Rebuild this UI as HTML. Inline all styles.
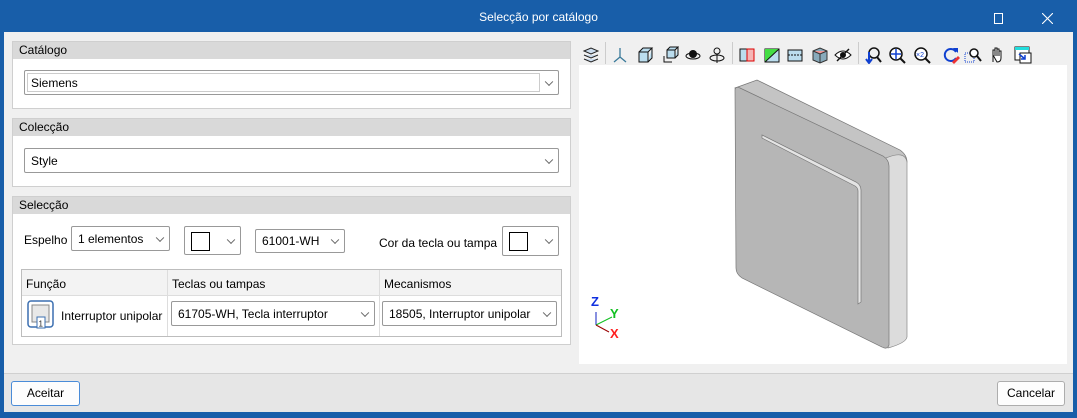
<!DOCTYPE html>
<html><head><meta charset="utf-8"><style>
*{box-sizing:border-box;margin:0;padding:0}
body{width:1077px;height:418px;overflow:hidden;background:#185ea9;font-family:"Liberation Sans",sans-serif;font-size:12px;color:#000;position:relative}
.a{position:absolute}
.title{left:0;top:0;width:1077px;height:32px;color:#fff;text-align:center;line-height:34px;font-size:12px}
.main{left:4px;top:32px;width:1069px;height:341px;background:#f0f0f0}
.bot{left:4px;top:373px;width:1069px;height:39px;background:#e6e6e6;border-top:1px solid #d0d0d0}
.grp{background:#fff;border:1px solid #cfcfcf}
.gh{background:#d9d9d9;height:17px;line-height:17px;padding-left:6px;font-size:12px}
.cb{background:#fff;border:1px solid #999;border-radius:2px}
.cb .t{position:absolute;left:6px;top:0;bottom:0;display:flex;align-items:center}
.ch{position:absolute;right:6px;top:50%;width:6px;height:6px;border-right:1px solid #666;border-bottom:1px solid #666;transform:translateY(-70%) rotate(45deg)}
.sw{position:absolute;left:6px;top:5px;width:19px;height:19px;border:1px solid #000;background:#fff}
.btn{background:#fdfdfd;border:1px solid #adadad;border-radius:3px;text-align:center;line-height:23px}
.ic{top:46px;width:18px;height:18px}
</style></head><body>
<div class="a title">Selecção por catálogo</div>
<div class="a" style="left:994px;top:13px;width:9px;height:11px;border:1px solid #fff"></div>
<svg class="a" style="left:1042px;top:13px" width="11" height="11"><path d="M0 0L11 11M11 0L0 11" stroke="#fff" stroke-width="1.1"/></svg>
<div class="a main"></div>

<div class="a grp" style="left:12px;top:41px;width:559px;height:68px"><div class="gh">Catálogo</div></div>
<div class="a cb" style="left:24px;top:70px;width:535px;height:25px"><div class="a" style="left:2px;top:2px;width:513px;height:19px;border:1px solid #ccc"></div><div class="t">Siemens</div><div class="ch"></div></div>
<div class="a grp" style="left:12px;top:118px;width:559px;height:69px"><div class="gh">Colecção</div></div>
<div class="a cb" style="left:24px;top:148px;width:535px;height:25px"><div class="t">Style</div><div class="ch"></div></div>
<div class="a grp" style="left:12px;top:196px;width:559px;height:149px"><div class="gh">Selecção</div></div>
<div class="a" style="left:24px;top:233px">Espelho</div>
<div class="a cb" style="left:71px;top:226px;width:99px;height:25px"><div class="t">1 elementos</div><div class="ch"></div></div>
<div class="a cb" style="left:184px;top:226px;width:57px;height:29px"><div class="sw"></div><div class="ch"></div></div>
<div class="a cb" style="left:255px;top:229px;width:90px;height:24px"><div class="t">61001-WH</div><div class="ch"></div></div>
<div class="a" style="left:379px;top:236px">Cor da tecla ou tampa</div>
<div class="a cb" style="left:502px;top:226px;width:57px;height:30px"><div class="sw"></div><div class="ch"></div></div>
<div class="a" style="left:21px;top:269px;width:541px;height:68px;border:1px solid #bdbdbd;background:#fff"></div>
<div class="a" style="left:22px;top:270px;width:539px;height:26px;background:#f3f3f3;border-bottom:1px solid #ddd"></div>
<div class="a" style="left:167px;top:270px;width:1px;height:66px;background:#ddd"></div>
<div class="a" style="left:379px;top:270px;width:1px;height:66px;background:#ddd"></div>
<div class="a" style="left:26px;top:277px">Função</div>
<div class="a" style="left:172px;top:277px">Teclas ou tampas</div>
<div class="a" style="left:384px;top:277px">Mecanismos</div>
<svg class="a" style="left:27px;top:300px" width="28" height="30" viewBox="0 0 28 30"><rect x="1" y="1" width="25" height="26" rx="3" fill="#fff" stroke="#3b6fb0" stroke-width="1.5"/><rect x="5" y="5" width="17" height="17" fill="#e8e8e8" stroke="#888"/><rect x="10" y="17" width="8" height="11" fill="#fff" stroke="#3b6fb0"/><text x="11.5" y="26.5" font-size="8" font-family="Liberation Sans" fill="#222">1</text></svg>
<div class="a" style="left:61px;top:309px">Interruptor unipolar</div>
<div class="a cb" style="left:171px;top:301px;width:204px;height:25px"><div class="t">61705-WH, Tecla interruptor</div><div class="ch"></div></div>
<div class="a cb" style="left:382px;top:301px;width:175px;height:25px"><div class="t">18505, Interruptor unipolar</div><div class="ch"></div></div>

<div class="a" style="left:605px;top:42px;width:1px;height:22px;background:#ccc"></div>
<div class="a" style="left:732px;top:42px;width:1px;height:22px;background:#ccc"></div>
<div class="a" style="left:858px;top:42px;width:1px;height:22px;background:#ccc"></div>
<svg class="a ic" style="left:582px" viewBox="0 0 18 18"><path d="M2 5l7-3 7 3-7 3z M2 9l7 3 7-3 M2 13l7 3 7-3" fill="#cde" stroke="#222"/></svg>
<svg class="a ic" style="left:611px" viewBox="0 0 18 18"><path d="M9 2v9 M9 11l-6 5 M9 11l6 5" stroke="#3a7a9a" fill="none" stroke-width="1.3"/></svg>
<svg class="a ic" style="left:636px" viewBox="0 0 18 18"><path d="M3 6h9v10H3z M3 6l4-4h9l-4 4 M12 16l4-4V2" fill="#bde" stroke="#111"/></svg>
<svg class="a ic" style="left:661px" viewBox="0 0 18 18"><path d="M6 4h8v8H6z M6 4l3-3h8l-3 3 M14 12l3-3V1" fill="#bde" stroke="#111"/><path d="M3 10v6h8" fill="none" stroke="#111"/></svg>
<svg class="a ic" style="left:684px" viewBox="0 0 18 18"><circle cx="9" cy="8" r="4" fill="#111"/><ellipse cx="9" cy="10" rx="7" ry="3" fill="none" stroke="#111"/></svg>
<svg class="a ic" style="left:708px" viewBox="0 0 18 18"><circle cx="9" cy="5" r="3" fill="none" stroke="#111"/><path d="M9 8v9" stroke="#111"/><ellipse cx="9" cy="12" rx="7" ry="3" fill="none" stroke="#111"/></svg>
<svg class="a ic" style="left:738px" viewBox="0 0 18 18"><rect x="2" y="3" width="7" height="12" fill="#bde" stroke="#111"/><rect x="9" y="3" width="7" height="12" fill="#f5b5b5" stroke="#d00"/></svg>
<svg class="a ic" style="left:763px" viewBox="0 0 18 18"><rect x="2" y="3" width="14" height="13" fill="#bde" stroke="#111"/><path d="M2 16L16 3V3H2z" fill="#4d4"/><path d="M2 16L16 3" stroke="#111"/></svg>
<svg class="a ic" style="left:786px" viewBox="0 0 18 18"><rect x="2" y="4" width="14" height="11" fill="#bde" stroke="#111"/><path d="M2 9h14" stroke="#111" stroke-dasharray="2 1"/></svg>
<svg class="a ic" style="left:811px" viewBox="0 0 18 18"><path d="M2 5l7-3 7 3v9l-7 3-7-3z" fill="#8ab" stroke="#333"/><path d="M2 5l7 3 7-3" fill="#e99" stroke="#333"/><path d="M9 8v9" stroke="#333"/></svg>
<svg class="a ic" style="left:834px" viewBox="0 0 18 18"><path d="M1 9q8-8 16 0q-8 8-16 0z" fill="#fff" stroke="#111"/><circle cx="9" cy="9" r="3" fill="#111"/><path d="M3 15L15 3" stroke="#111" stroke-width="1.5"/></svg>
<svg class="a ic" style="left:864px" viewBox="0 0 18 18"><circle cx="10" cy="7" r="5" fill="none" stroke="#111" stroke-width="1.5"/><path d="M13 11l4 5" stroke="#111" stroke-width="2"/><path d="M5 6v10M2 13l3 4 3-4" stroke="#1040d0" fill="none" stroke-width="2"/></svg>
<svg class="a ic" style="left:888px" viewBox="0 0 18 18"><circle cx="8" cy="8" r="6" fill="#fff" stroke="#111" stroke-width="1.5"/><path d="M12 12l5 5" stroke="#111" stroke-width="2"/><path d="M8 3v10M3 8h10" stroke="#1040d0" stroke-width="1.5"/></svg>
<svg class="a ic" style="left:913px" viewBox="0 0 18 18"><circle cx="8" cy="8" r="6" fill="#fff" stroke="#111" stroke-width="1.5"/><path d="M12 12l5 5" stroke="#111" stroke-width="2"/><text x="3" y="11" font-size="7" fill="#1040d0" font-family="Liberation Sans">×2</text></svg>
<svg class="a ic" style="left:942px" viewBox="0 0 18 18"><path d="M14 6a6 6 0 1 0 0 6" fill="none" stroke="#1040d0" stroke-width="2"/><path d="M11 2h5v5z" fill="#1040d0"/><path d="M10 16l6-6 2 2-6 6z" fill="#e33"/></svg>
<svg class="a ic" style="left:964px" viewBox="0 0 18 18"><rect x="1" y="7" width="9" height="9" fill="none" stroke="#1040d0" stroke-dasharray="1 1"/><circle cx="10" cy="7" r="4" fill="#fff" stroke="#111" stroke-width="1.5"/><path d="M13 10l4 5" stroke="#111" stroke-width="2"/></svg>
<svg class="a ic" style="left:988px" viewBox="0 0 18 18"><path d="M5 16V7M5 9V4h2v6V2h2v8V3h2v7V5h2v7q0 4-4 4z" fill="#fff" stroke="#111"/></svg>
<svg class="a ic" style="left:1014px" viewBox="0 0 18 18"><rect x="1" y="1" width="14" height="13" fill="#fff" stroke="#111"/><rect x="1" y="1" width="14" height="3" fill="#2dd"/><rect x="6" y="7" width="11" height="10" fill="#fff" stroke="#111"/><path d="M5 8l6 5M11 9v4H7" stroke="#1040d0" fill="none" stroke-width="1.5"/></svg>

<div class="a" style="left:579px;top:65px;width:488px;height:299px;background:#fff"></div>
<svg class="a" style="left:579px;top:65px" width="488" height="299" viewBox="579 65 488 299">
<path d="M735 88 L757 80 L900 150 Q907 155 907 162 L887 160 Z" fill="#c4c4c4" stroke="#777" stroke-width="0.7"/>
<path d="M886 158 Q905 150 907 162 L907 337 Q906 343 888 348 Z" fill="#dcdcdc" stroke="#888" stroke-width="0.7"/>
<path d="M735 90 Q735 86 740 88 L883 156 Q889 160 889 166 L889 345 Q887 350 882 347 L742 278 Q736 274 736 268 Z" fill="#b6b6b6" stroke="#777" stroke-width="0.7"/>
<path d="M762 135 L856 182 Q861 185 861 190 L861 302 L858 304 L858 191 Q858 188 855 186 L762 138 Z" fill="#e4e4e4" stroke="#777" stroke-width="0.7"/>
<path d="M596 312 V325" fill="none" stroke="#1020c0" stroke-width="1"/>
<path d="M596 325 L612 317" stroke="#10c020"/>
<path d="M596 325 L609 332" stroke="#900"/>
<text x="591" y="306" fill="#1030e0" font-size="13" font-weight="bold" font-family="Liberation Sans">Z</text>
<text x="610" y="318" fill="#10c020" font-size="13" font-weight="bold" font-family="Liberation Sans">Y</text>
<text x="610" y="338" fill="#ff2020" font-size="13" font-weight="bold" font-family="Liberation Sans">X</text>
</svg>

<div class="a bot"></div>
<div class="a btn" style="left:11px;top:381px;width:69px;height:25px;border-color:#4a8cd8">Aceitar</div>
<div class="a btn" style="left:997px;top:381px;width:68px;height:25px">Cancelar</div>
</body></html>
